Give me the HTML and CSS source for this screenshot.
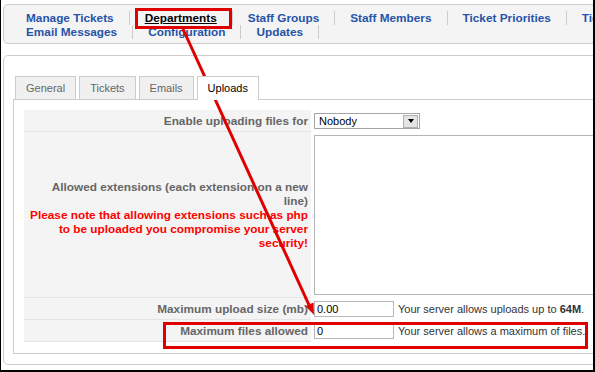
FILE: index.html
```html
<!DOCTYPE html>
<html>
<head>
<meta charset="utf-8">
<link rel="stylesheet" href="styles.css">
</head>
<body>
<div class="shot">
  <div class="viewport">
    <div class="page">
      <div class="submenu">
        <ul>
          <li><a>Manage Tickets</a></li>
          <li><a class="active">Departments</a></li>
          <li><a>Staff Groups</a></li>
          <li><a>Staff Members</a></li>
          <li><a>Ticket Priorities</a></li>
          <li><a>Ticket Statuses</a></li>
          <li><a>Email Messages</a></li>
          <li><a>Configuration</a></li>
          <li><a>Updates</a></li>
        </ul>
      </div>
      <div class="panel">
        <ul class="tabs">
          <li>General</li>
          <li>Tickets</li>
          <li>Emails</li>
          <li class="current">Uploads</li>
        </ul>
        <div class="tabpane">
          <table class="admintable">
            <tr>
              <td class="key">Enable uploading files for</td>
              <td class="val">
                <div class="select"><span class="sel-text">Nobody</span><span class="sel-btn"><i></i></span></div>
              </td>
            </tr>
            <tr>
              <td class="key">Allowed extensions (each extension on a new line)<span class="warn">Please note that allowing extensions such as php to be uploaded you compromise your server security!</span></td>
              <td class="val"><textarea class="exts"></textarea></td>
            </tr>
            <tr>
              <td class="key">Maximum upload size (mb)</td>
              <td class="val"><div class="field"><input class="txt" type="text" value="0.00"><span>Your server allows uploads up to <b>64M</b>.</span></div></td>
            </tr>
            <tr>
              <td class="key">Maximum files allowed</td>
              <td class="val"><div class="field"><input class="txt" type="text" value="0"><span>Your server allows a maximum of files.</span></div></td>
            </tr>
          </table>
        </div>
      </div>
    </div>
  </div>
  <svg class="annot" width="595" height="372" viewBox="0 0 595 372">
    <rect x="136.5" y="9.5" width="94" height="18" fill="none" stroke="#e00000" stroke-width="3"/>
    <line x1="183" y1="29" x2="309" y2="305" stroke="#e00000" stroke-width="3"/>
    <polygon points="314,315 305.5,306 313.5,302.5" fill="#e00000"/>
    <rect x="164.5" y="323.5" width="422" height="24" fill="none" stroke="#e00000" stroke-width="3"/>
  </svg>
</div>
</body>
</html>
```

FILE: styles.css
```css
html, body {
  margin: 0;
  padding: 0;
  background: #fff;
}

body {
  font-family: "Liberation Sans", Arial, sans-serif;
  font-size: 11px;
}

.shot {
  position: relative;
  width: 595px;
  height: 372px;
}

.viewport {
  box-sizing: border-box;
  width: 595px;
  height: 372px;
  border-style: solid;
  border-color: #000;
  border-width: 0 2px 2px 1px;
  overflow: hidden;
}

.page {
  width: 780px;
  padding: 4px 0 0 2px;
}

/* submenu */
.submenu {
  border: 1px solid #ccc;
  border-radius: 5px;
  background: #f4f4f4;
  padding: 6px 0 4px 7px;
}

.submenu ul {
  list-style: none;
  margin: 0;
  padding: 0;
  display: flex;
  flex-wrap: wrap;
  width: 730px;
}

.submenu li {
  padding: 0 15px;
  border-right: 1px solid #ccc;
  line-height: 14px;
}

.submenu a {
  color: #2653a8;
  font-size: 11.8px;
  font-weight: bold;
  text-decoration: none;
}

.submenu a.active {
  color: #000;
  text-decoration: underline;
}

/* main panel */
.panel {
  margin-top: 11px;
  border: 1px solid #ccc;
  border-radius: 5px;
  background: #fff;
  padding: 20px 9px 10px 9px;
}

.tabs {
  list-style: none;
  display: flex;
  align-items: flex-start;
  gap: 3px;
  margin: 0 0 -1px 2px;
  padding: 0;
  position: relative;
  z-index: 1;
}

.tabs li {
  height: 22px;
  line-height: 22px;
  padding: 0 10px;
  border: 1px solid #ccc;
  border-bottom: 0;
  background: #f0f0f0;
  color: #666;
}

.tabs li.current {
  height: 23px;
  background: #fff;
  color: #000;
}

.tabpane {
  border: 1px solid #ccc;
  background: #fff;
  padding: 10px 10px 11px 10px;
}

.admintable {
  border-collapse: separate;
  border-spacing: 0;
}

.admintable td {
  padding: 3px;
  vertical-align: middle;
  line-height: 14px;
}

.admintable td.key {
  width: 279px;
  padding-left: 5px;
  background: #f4f4f4;
  color: #666;
  font-size: 11.8px;
  font-weight: bold;
  text-align: right;
  border-bottom: 1px solid #e4e4e4;
}

.warn {
  display: block;
  color: #f00;
}

.admintable td.val {
  color: #333;
}

/* fake select */
.select {
  box-sizing: border-box;
  width: 106px;
  height: 16px;
  border: 1px solid #a5a5a5;
  background: #fff;
  display: flex;
  align-items: center;
  justify-content: space-between;
  padding: 0 1px 0 4px;
  color: #000;
}

.sel-btn {
  box-sizing: border-box;
  width: 15px;
  height: 13px;
  border: 1px solid #b0b0b0;
  background: #e4e4e4;
  display: flex;
  align-items: center;
  justify-content: center;
}

.sel-btn i {
  width: 0;
  height: 0;
  border-top: 4px solid #000;
  border-left: 3px solid transparent;
  border-right: 3px solid transparent;
}

.exts {
  display: block;
  box-sizing: border-box;
  width: 340px;
  height: 160px;
  border: 1px solid #b5b5b5;
  resize: none;
  margin: 0;
}

.field {
  display: flex;
  align-items: center;
  gap: 4px;
  white-space: nowrap;
}

.txt {
  box-sizing: border-box;
  width: 80px;
  height: 16px;
  margin: 0;
  border: 1px solid #b8b8b8;
  padding: 0 2px;
  font-family: "Liberation Sans", Arial, sans-serif;
  font-size: 11px;
  color: #000;
}

.annot {
  position: absolute;
  left: 0;
  top: 0;
  pointer-events: none;
}
```
